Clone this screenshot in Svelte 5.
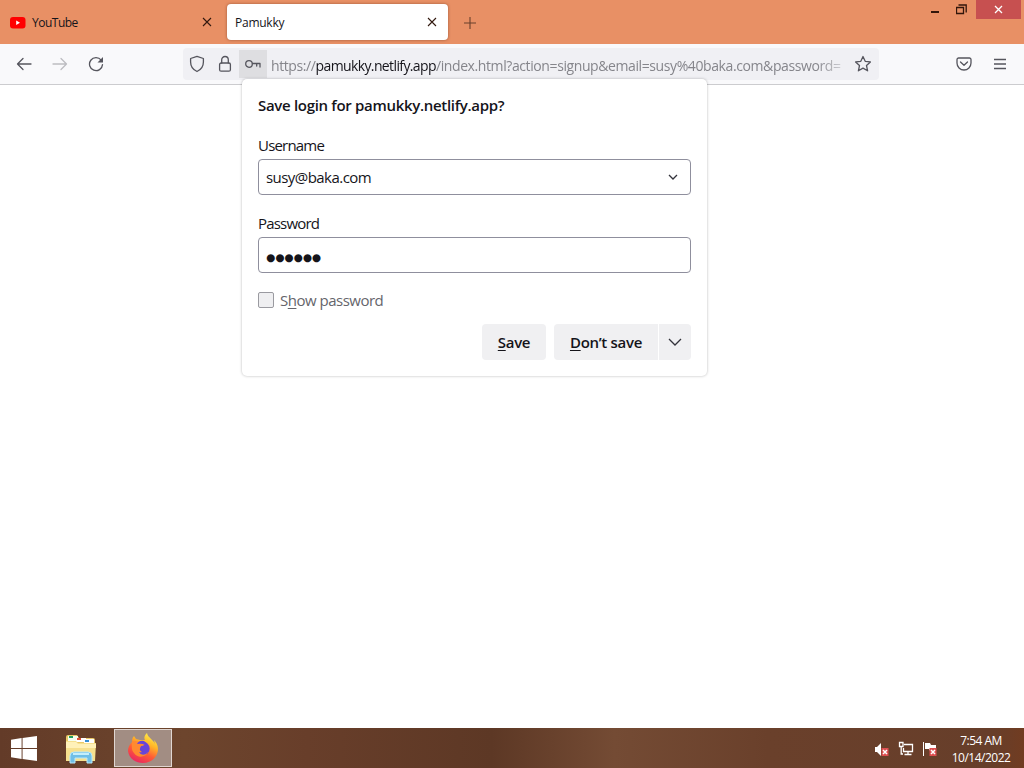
<script lang="ts">
    let username: string = $state("susy@baka.com");
    let password: string = $state("●●●●●●");
    let showPassword: boolean = $state(false);
</script>

<svelte:head>
    <title>Pamukky</title>
</svelte:head>

<div class="desktop">
    <header class="tabBar">
        <div class="tab">
            <svg class="youtube" width="16" height="12" viewBox="0 0 16 12">
                <rect width="15.5" height="11.5" rx="3" fill="#f00" />
                <path d="M6.2 3.6 10 5.8 6.2 8z" fill="#fff" />
            </svg>
            <span class="tabTitle first">YouTube</span>
            <svg class="tabClose" width="10" height="10" viewBox="0 0 10 10"><path d="M1 1l8 8M9 1l-8 8" /></svg>
        </div>
        <div class="tab active">
            <span class="tabTitle">Pamukky</span>
            <svg class="tabClose" width="10" height="10" viewBox="0 0 10 10"><path d="M1 1l8 8M9 1l-8 8" /></svg>
        </div>
        <svg class="newTab" width="12" height="12" viewBox="0 0 12 12"><path d="M6 0v12M0 6h12" /></svg>
        <div class="windowButtons">
            <svg class="minimize" width="8" height="2" viewBox="0 0 8 2"><path d="M0 1h8" /></svg>
            <svg class="restore" width="11" height="11" viewBox="0 0 11 11">
                <path d="M.5 3.500h7v6h-7z" />
                <path d="M2.500 1h7.700v7.400" />
            </svg>
            <div class="closeWindow">
                <svg width="9" height="9" viewBox="0 0 9 9"><path d="M1 1l7 7M8 1L1 8" /></svg>
            </div>
        </div>
    </header>

    <nav class="toolbar">
        <svg class="icon back" width="16" height="16" viewBox="0 0 16 16"><path d="M15 8H1.5M7 2.5 1.5 8 7 13.5" /></svg>
        <svg class="icon forward" width="16" height="16" viewBox="0 0 16 16"><path d="M1 8h13.5M9 2.5 14.500 8 9 13.5" /></svg>
        <svg class="icon reload" width="16" height="16" viewBox="0 0 16 16">
            <path d="M13.200 4.200A6.500 6.500 0 1 0 14.500 8.600" />
            <path class="solid" d="M15 1v5.500H9.500z" />
        </svg>
        <div class="urlBar">
            <svg class="icon shield" width="16" height="18" viewBox="0 0 16 18">
                <path d="M8 1.300 14.400 3.500V7c0 4.500-2.600 7.800-6.400 9.500C4.200 14.800 1.600 11.500 1.600 7V3.500z" />
            </svg>
            <svg class="icon lock" width="14" height="18" viewBox="0 0 14 18">
                <rect x="1.600" y="8" width="10.800" height="8.200" rx="1.500" />
                <path d="M3.700 8V4.800a3.300 3.300 0 0 1 6.600 0V8" />
            </svg>
            <div class="keyBox">
                <svg class="icon" width="17" height="12" viewBox="0 0 17 12">
                    <circle cx="4" cy="6" r="3.300" />
                    <path d="M7.500 5.500h7.500V9M11.700 5.500V8" />
                </svg>
            </div>
            <div class="url"><span>https://</span><b>pamukky.netlify.app</b><span class="path">/index.html?action=signup&amp;email=susy%40baka.com&amp;password=</span></div>
            <svg class="icon star" width="18" height="18" viewBox="0 0 18 18">
                <path d="M9 1.500 11.200 6.300 16.400 6.900 12.500 10.500 13.600 15.800 9 13.100 4.400 15.800 5.500 10.500 1.600 6.900 6.800 6.300z" />
            </svg>
        </div>
        <svg class="icon pocket" width="16" height="14" viewBox="0 0 16 14">
            <path d="M2.500 1h11A1.600 1.600 0 0 1 15 2.600V6A7 7 0 0 1 1 6V2.600A1.600 1.600 0 0 1 2.500 1z" />
            <path d="M4.500 5 8 8.300 11.500 5" />
        </svg>
        <svg class="icon menu" width="12" height="12" viewBox="0 0 12 12"><path d="M0 1.500h12M0 6h12M0 10.500h12" /></svg>
    </nav>

    <main class="page">
        <section class="popup">
            <h1>Save login for pamukky.netlify.app?</h1>
            <label for="username">Username</label>
            <div class="field">
                <input id="username" type="text" bind:value={username} />
                <svg width="10" height="6" viewBox="0 0 10 6"><path d="M1 1l4 4 4-4" /></svg>
            </div>
            <label for="password">Password</label>
            <div class="field">
                <input id="password" class="dots" type="text" bind:value={password} />
            </div>
            <label class="show">
                <input type="checkbox" bind:checked={showPassword} />
                <span>S<u>h</u>ow password</span>
            </label>
            <div class="buttons">
                <button class="save"><u>S</u>ave</button>
                <button class="dontSave"><u>D</u>on’t save</button>
                <button class="more" aria-label="More">
                    <svg width="14" height="8" viewBox="0 0 14 8"><path d="M1 1l6 6 6-6" /></svg>
                </button>
            </div>
        </section>
    </main>

    <footer class="taskbar">
        <svg class="start" width="26" height="25" viewBox="0 0 27 26" fill="#fff">
            <path d="M0 3.800 11 2.200V12.500H0zM12 2 27 0V12.500H12zM0 13.500H11V23.800L0 22.200zM12 13.500H27V26L12 24z" />
        </svg>
        <svg class="explorer" width="34" height="30" viewBox="0 0 34 30">
            <path d="M2 3q0-2 2-2h9l2 3h14q2 0 2 2v21H2z" fill="#e9c968" />
            <path d="M4 2h10v5H4z" fill="#f7fff0" />
            <path d="M5 2h4v2H5z" fill="#24a060" />
            <path d="M12 4h10v4H12z" fill="#fff" />
            <path d="M13 4h4v2h-4z" fill="#df5037" />
            <path d="M20 5h10v4H20z" fill="#fff" />
            <path d="M21 6h4v2h-4z" fill="#3790d5" />
            <path d="M2 7h10l2 2h18l-1 18H2z" fill="#f6e08e" />
            <path d="M2 8h10l2 2h18v4H2z" fill="#fff1b8" />
            <path d="M6 29V22q0-4 4-4h14q4 0 4 4v7h-5v-5H11v5z" fill="#70bfe7" stroke="#b9e8fa" />
            <path d="M9 20h16" stroke="#c5eefb" stroke-width="2" />
        </svg>
        <div class="task">
            <svg width="32" height="32" viewBox="0 0 32 32">
                <defs>
                    <linearGradient id="flame" x1=".8" y1="0" x2=".3" y2="1">
                        <stop offset="0" stop-color="#fff44f" />
                        <stop offset=".35" stop-color="#ffb527" />
                        <stop offset=".65" stop-color="#ff5b35" />
                        <stop offset="1" stop-color="#e92663" />
                    </linearGradient>
                    <linearGradient id="globe" x1=".7" y1="0" x2=".3" y2="1">
                        <stop offset="0" stop-color="#9040df" />
                        <stop offset="1" stop-color="#5147d4" />
                    </linearGradient>
                </defs>
                <path d="M20 1c-3 3-3 5-2 7h-5L9 7 7 4C5 6 5 8 5 10 2 13 1 16 1 19c1 8 8 12 15 12 9 0 15-7 15-14 0-4-2-7-4-9l1 4c-2-5-7-6-8-11z" fill="url(#flame)" />
                <circle cx="16" cy="16.500" r="6.700" fill="url(#globe)" />
                <path d="M5 10c3-2 6-1 9 1l4 1c-1 2-3 2-4 3-2 2-1 4 1 5 3 1 4-1 6 0-2 5-10 7-14 1-3-3-2-7-2-11z" fill="#ff8a30" />
                <path d="M10 12q2-4 7-3 5 3 5 8 0 3-3 5-5 2-7-2 3 1 5-1-5-1-3-5 2 0 4-1-3-2-8-1z" fill="#6845d9" />
            </svg>
        </div>
        <div class="tray">
            <svg width="16" height="16" viewBox="0 0 16 16">
                <path d="M1 6h2l4-4v13L3 11H1z" fill="#fff" />
                <path d="M7.500 7h7v8h-7z" fill="#dc4e50" />
                <path d="M9 9l4 4M13 9l-4 4" stroke="#fff" stroke-width="1.500" />
            </svg>
            <svg width="16" height="16" viewBox="0 0 16 16" fill="none" stroke="#fff" stroke-width="1.300">
                <path d="M6 3.500h8.500v7H5.500V7M10 10.500v3M6.500 13.500h7M1.500 1.500h3.500v4H1.500zM3.200 5.500v7.500H5" />
            </svg>
            <svg width="16" height="16" viewBox="0 0 16 16">
                <path d="M1.500 1v14" stroke="#fff" />
                <path d="M3 2h5l1 2h5v6H8L7 8H3z" fill="#fff" />
                <path d="M7.500 7h7v8h-7z" fill="#dc4e50" />
                <path d="M9 9l4 4M13 9l-4 4" stroke="#fff" stroke-width="1.500" />
            </svg>
        </div>
        <div class="clock">
            <span>7:54 AM</span>
            <span>10/14/2022</span>
        </div>
    </footer>
</div>

<style>
    :global(body) {
        margin: 0;
        overflow: hidden;
    }
    .desktop {
        width: 1024px;
        height: 768px;
        display: flex;
        flex-direction: column;
        background: #fff;
        color: #15141a;
        font-family: "Open Sans", "Noto Sans", sans-serif;
        font-size: 15px;
    }
    .desktop * {
        box-sizing: border-box;
    }
    svg {
        display: block;
        flex: none;
    }

    /* Tabs */
    .tabBar {
        height: 44px;
        display: flex;
        align-items: flex-start;
        background: #e89065;
    }
    .tab {
        width: 221px;
        height: 36px;
        margin: 4px 3px 0 2px;
        padding: 0 11px 0 8px;
        display: flex;
        align-items: center;
        border-radius: 4px;
    }
    .tab.active {
        margin: 4px 0 0 1px;
        background: #fff;
        box-shadow: 0 0 3px rgba(80, 30, 10, 0.5);
    }
    .youtube {
        margin-right: 6px;
        margin-top: 1px;
    }
    .tabTitle {
        flex: 1;
        padding-top: 1px;
        font-size: 12px;
        line-height: 17px;
        letter-spacing: -0.25px;
    }
    .tabTitle.first {
        letter-spacing: -0.5px;
    }
    .tabClose, .newTab {
        fill: none;
        stroke: #32190f;
        stroke-width: 1.1;
    }
    .newTab {
        margin: 17px 0 0 16px;
        stroke: #69402c;
    }
    .windowButtons {
        margin-left: auto;
        display: flex;
        fill: none;
        stroke: #32160b;
        stroke-width: 1.3;
    }
    .minimize {
        margin: 11px 17px 0 0;
        stroke-width: 2;
    }
    .restore {
        margin: 4px 9px 0 0;
    }
    .closeWindow {
        width: 45px;
        height: 19px;
        margin-right: 3px;
        display: flex;
        align-items: center;
        justify-content: center;
        background: #c75050;
        stroke: #fff;
    }

    /* Navigation */
    .toolbar {
        height: 41px;
        display: flex;
        align-items: center;
        padding-left: 16px;
        background: #f9f9fb;
        border-bottom: 1px solid #cccccf;
    }
    .icon {
        fill: none;
        stroke: #55555d;
        stroke-width: 1.3;
        stroke-linejoin: round;
        stroke-linecap: round;
    }
    .forward {
        margin: 0 20px;
        stroke: #bdbdc1;
    }
    .solid {
        fill: #55555d;
        stroke: none;
    }
    .urlBar {
        width: 696px;
        height: 32px;
        margin-left: 79px;
        display: flex;
        align-items: center;
        background: #f0f0f4;
        border-radius: 4px;
    }
    .shield {
        margin-left: 6px;
    }
    .lock {
        margin: 0 7px 0 13px;
    }
    .keyBox {
        width: 28px;
        height: 28px;
        display: flex;
        align-items: center;
        justify-content: center;
        background: #dedee1;
    }
    .url {
        width: 571px;
        margin-left: 4px;
        padding-top: 2px;
        overflow: hidden;
        white-space: nowrap;
        font-size: 14px;
        letter-spacing: -0.4px;
        color: #85858b;
        mask-image: linear-gradient(to right, #000 545px, rgba(0, 0, 0, 0.3));
    }
    .url b {
        font-weight: 400;
        letter-spacing: -0.62px;
        color: #15141a;
    }
    .path {
        letter-spacing: -0.4px;
    }
    .star {
        margin-left: 12px;
    }
    .pocket {
        margin-left: 77px;
    }
    .menu {
        margin-left: 22px;
    }

    /* Save login doorhanger */
    .page {
        flex: 1;
    }
    .popup {
        position: relative;
        width: 465px;
        height: 297px;
        margin: -6px 0 0 242px;
        padding: 16px;
        display: flex;
        flex-direction: column;
        background: #fff;
        border-radius: 5px;
        box-shadow: 0 0 3px rgba(0, 0, 0, 0.28);
    }
    h1 {
        margin: 0 0 20px;
        font-size: 15px;
        line-height: 20px;
        font-weight: 550;
        letter-spacing: -0.31px;
        white-space: nowrap;
    }
    label {
        height: 24px;
        line-height: 20px;
        letter-spacing: -0.8px;
    }
    .field {
        flex: none;
        height: 36px;
        margin-bottom: 18px;
        padding: 0 12px 0 7px;
        display: flex;
        align-items: center;
        border: 1px solid #8f8f9d;
        border-radius: 4px;
    }
    .field input {
        flex: 1;
        min-width: 0;
        padding: 0;
        border: 0;
        outline: 0;
        background: none;
        color: #15141a;
        font: inherit;
        letter-spacing: -0.55px;
    }
    .field input.dots {
        padding-top: 3px;
        font-family: "DejaVu Sans", sans-serif;
        font-size: 10.5px;
        letter-spacing: 0;
    }
    .field svg, .more svg {
        fill: none;
        stroke: #33333b;
        stroke-width: 1.3;
    }
    .show {
        height: 22px;
        margin: -2px 0 13px;
        display: flex;
        align-items: center;
        color: #65656b;
        letter-spacing: -0.5px;
    }
    .show input {
        appearance: none;
        width: 16px;
        height: 16px;
        margin: 0 6px 0 0;
        border: 1px solid #9a9aa0;
        border-radius: 2px;
        background: #efeff1;
    }
    u {
        text-underline-offset: 2px;
        text-decoration-thickness: 1px;
    }
    .buttons {
        display: flex;
        justify-content: flex-end;
    }
    button {
        height: 36px;
        padding: 0;
        border: 0;
        border-radius: 4px;
        background: #f0f0f2;
        color: #15141a;
        font: inherit;
        font-weight: 550;
        letter-spacing: -0.3px;
        white-space: nowrap;
    }
    .save {
        width: 64px;
        margin-right: 8px;
    }
    .dontSave {
        width: 104px;
        margin-right: 1px;
        border-radius: 4px 0 0 4px;
    }
    .more {
        width: 32px;
        display: flex;
        align-items: center;
        justify-content: center;
        border-radius: 0 4px 4px 0;
    }

    /* Taskbar */
    .taskbar {
        height: 40px;
        display: flex;
        align-items: center;
        padding: 0 14px 0 11px;
        background: linear-gradient(90deg, #633b28, #6d452d 18%, #683e2a 30%, #5d3825 48%, #744b34 60%, #6a402b 75%, #673e2a 97%, #713c21);
    }
    .explorer {
        margin: 2px 16px 0 27px;
    }
    .task {
        width: 58px;
        height: 38px;
        display: flex;
        align-items: center;
        justify-content: center;
        border: 1px solid #e0d6d1;
        background: #a28d83;
    }
    .tray {
        margin-left: auto;
        display: flex;
        gap: 8px;
        padding-top: 2px;
    }
    .clock {
        width: 58px;
        margin-left: 14px;
        padding-top: 1px;
        display: flex;
        flex-direction: column;
        align-items: center;
        color: #fff;
        font-size: 12px;
        line-height: 17px;
        letter-spacing: -0.5px;
        white-space: nowrap;
    }
</style>
